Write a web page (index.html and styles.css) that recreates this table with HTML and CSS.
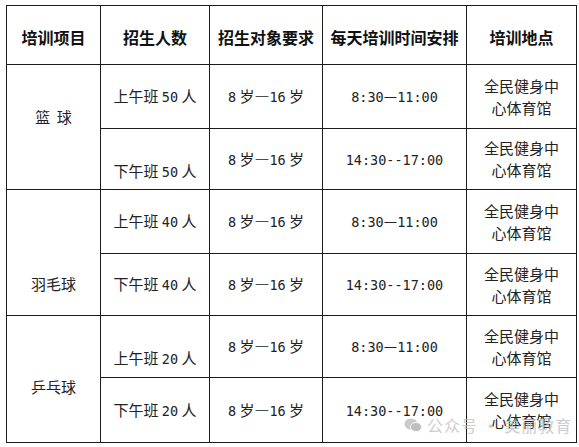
FILE: index.html
```html
<!DOCTYPE html>
<html lang="zh">
<head>
<meta charset="utf-8">
<link rel="stylesheet" href="styles.css">
</head>
<body>
<div class="page">
<table class="sched">
<colgroup>
<col class="c1"><col class="c2"><col class="c3"><col class="c4"><col class="c5">
</colgroup>
<thead>
<tr class="h0"><th>培训项目</th><th>招生人数</th><th>招生对象要求</th><th>每天培训时间安排</th><th>培训地点</th></tr>
</thead>
<tbody>
<tr class="r1">
<td rowspan="2" class="sport up10">篮&nbsp;&nbsp;球</td>
<td>上午班 <span class="n">50</span> 人</td>
<td><span class="n">8</span> 岁—<span class="n">16</span> 岁</td>
<td><span class="n">8:30</span>—<span class="n">11:00</span></td>
<td class="loc">全民健身中<br>心体育馆</td>
</tr>
<tr class="r2">
<td class="down12">下午班 <span class="n">50</span> 人</td>
<td><span class="n">8</span> 岁—<span class="n">16</span> 岁</td>
<td><span class="n">14:30--17:00</span></td>
<td class="loc">全民健身中<br>心体育馆</td>
</tr>
<tr class="r3">
<td rowspan="2" class="sport down31">羽毛球</td>
<td>上午班 <span class="n">40</span> 人</td>
<td><span class="n">8</span> 岁—<span class="n">16</span> 岁</td>
<td><span class="n">8:30</span>—<span class="n">11:00</span></td>
<td class="loc">全民健身中<br>心体育馆</td>
</tr>
<tr class="r4">
<td>下午班 <span class="n">40</span> 人</td>
<td><span class="n">8</span> 岁—<span class="n">16</span> 岁</td>
<td><span class="n">14:30--17:00</span></td>
<td class="loc">全民健身中<br>心体育馆</td>
</tr>
<tr class="r5">
<td rowspan="2" class="sport down8">乒乓球</td>
<td class="down12">上午班 <span class="n">20</span> 人</td>
<td><span class="n">8</span> 岁—<span class="n">16</span> 岁</td>
<td><span class="n">8:30</span>—<span class="n">11:00</span></td>
<td class="loc">全民健身中<br>心体育馆</td>
</tr>
<tr class="r6">
<td>下午班 <span class="n">20</span> 人</td>
<td><span class="n">8</span> 岁—<span class="n">16</span> 岁</td>
<td><span class="n">14:30--17:00</span></td>
<td class="loc">全民健身中<br>心体育馆</td>
</tr>
</tbody>
</table>
<div class="watermark">
<svg class="wx" width="18" height="14" viewBox="0 0 18 14"><ellipse cx="7" cy="6" rx="6.5" ry="5.5" fill="#b9b9b9"/><ellipse cx="12" cy="9" rx="5.5" ry="4.6" fill="#a9a9a9" stroke="#f4f4f4" stroke-width="1"/></svg>
<span class="wt">公众号 · 美丽教育</span>
</div>
</div>
</body>
</html>
```
FILE: styles.css
```css
html, body {
  margin: 0;
  padding: 0;
  background: #fff;
}
.page {
  position: relative;
  width: 579px;
  height: 447px;
  padding: 5px 0 0 6px;
  box-sizing: border-box;
}
.sched {
  border-collapse: collapse;
  table-layout: fixed;
  width: 570px;
  font-family: "Noto Sans CJK SC", sans-serif;
  font-size: 15px;
  color: #222;
}
.c1 { width: 94px; }
.c2 { width: 109px; }
.c3 { width: 113px; }
.c4 { width: 144px; }
.c5 { width: 110px; }
.sched th, .sched td {
  border: 1px solid #1c1c1c;
  text-align: center;
  vertical-align: middle;
  padding: 0;
  line-height: 22px;
}
.sched th {
  font-size: 16px;
  font-weight: 700;
  color: #111;
  padding-top: 4px;
}
.h0 { height: 59px; }
.r1 { height: 64px; }
.r2 { height: 61px; }
.r3 { height: 64px; }
.r4 { height: 62px; }
.r5 { height: 62px; }
.r6 { height: 65px; }
.n {
  font-family: "DejaVu Sans Mono", monospace;
  font-size: 13.5px;
}
.loc { line-height: 22px; }
.up10 { padding-bottom: 20px !important; }
.down12 { padding-top: 24px !important; }
.down31 { padding-top: 62px !important; }
.down8 { padding-top: 16px !important; }
.watermark {
  position: absolute;
  left: 404px;
  top: 413px;
  display: flex;
  align-items: center;
  gap: 5px;
  opacity: 0.75;
}
.wt {
  font-family: "Noto Sans CJK SC", sans-serif;
  font-size: 16px;
  color: #bdbdbd;
  letter-spacing: 1px;
}
```
